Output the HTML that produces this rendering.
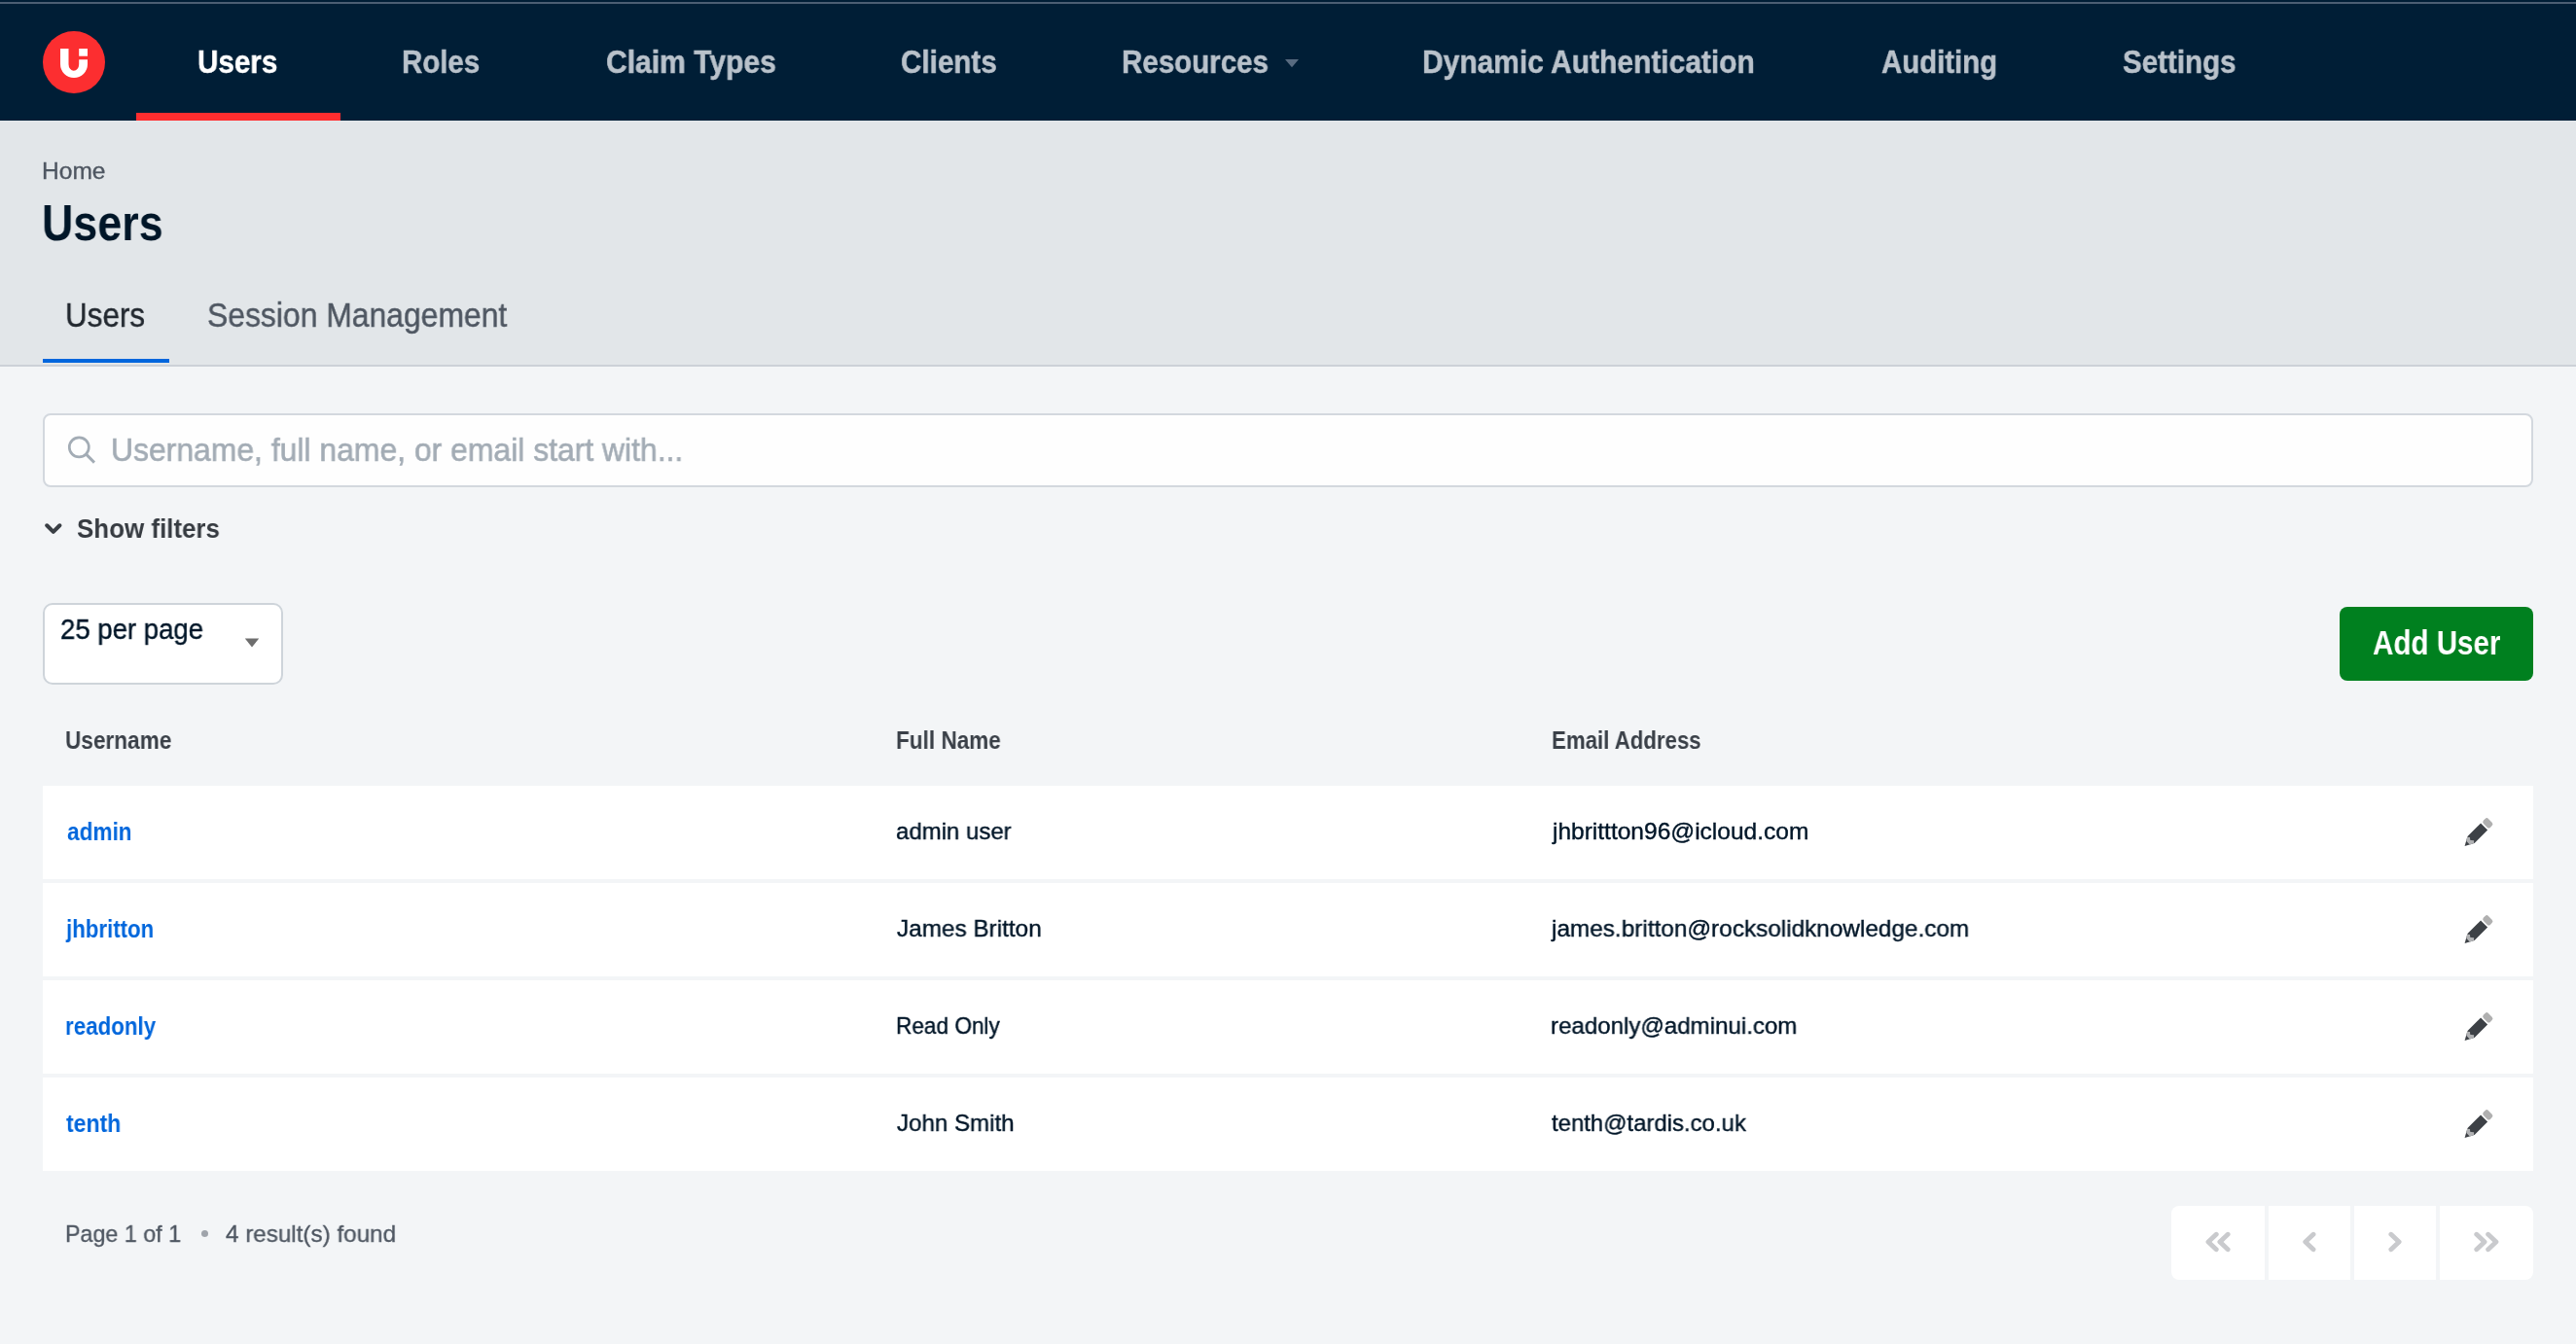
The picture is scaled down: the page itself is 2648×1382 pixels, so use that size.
<!DOCTYPE html>
<html><head><meta charset="utf-8">
<style>
html,body{margin:0;padding:0;}
body{width:2648px;height:1382px;overflow:hidden;position:relative;background:#f3f5f7;font-family:"Liberation Sans",sans-serif;}
.abs{position:absolute;}
.t{position:absolute;white-space:nowrap;transform-origin:0 0;will-change:transform;}
</style></head><body>
<div class="abs" style="left:0;top:0;width:2648px;height:124px;background:#001e36"></div>
<div class="abs" style="left:0;top:2px;width:2648px;height:2px;background:#4b5e73"></div>
<svg class="abs" style="left:44px;top:32px" width="64" height="64" viewBox="0 0 64 64">
<circle cx="32" cy="32" r="32" fill="#fc2e30"/>
<path d="M18,18 H26.5 V34 A5.35,6.7 0 0 0 37.2,34 V29.2 H46 V34 A14,14 0 0 1 18,34 Z" fill="#fff"/>
<rect x="37.2" y="18" width="8.8" height="7.7" fill="#fff"/>
</svg>
<div class="abs" style="left:140px;top:116px;width:210px;height:8px;background:#ff2d2f"></div>
<svg class="abs" style="left:1321px;top:61px" width="14" height="9" viewBox="0 0 14 9"><polygon points="0,0 14,0 7,8.2" fill="#586b80"/></svg>
<div class="abs" style="left:0;top:124px;width:2648px;height:251px;background:#e2e6e9"></div>
<div class="abs" style="left:0;top:375px;width:2648px;height:2px;background:#ccd1d8"></div>
<div class="abs" style="left:44px;top:369px;width:130px;height:4px;background:#0066dd"></div>
<div class="abs" style="left:44px;top:425px;width:2556px;height:72px;border:2px solid #d3d8de;border-radius:8px;background:#fefefe"></div>
<svg class="abs" style="left:66px;top:445px" width="36" height="36" viewBox="0 0 36 36"><circle cx="15.3" cy="14.9" r="10" fill="none" stroke="#a3acb5" stroke-width="2.7"/><line x1="22.3" y1="21.9" x2="31" y2="30.6" stroke="#a3acb5" stroke-width="2.9" stroke-linecap="butt"/></svg>
<svg class="abs" style="left:44px;top:536px" width="22" height="16" viewBox="0 0 22 16"><polyline points="4.2,4.3 10.8,10.9 17.4,4.3" fill="none" stroke="#3a3f45" stroke-width="4.1" stroke-linecap="round" stroke-linejoin="round"/></svg>
<div class="abs" style="left:44px;top:620px;width:243px;height:80px;border:2px solid #ced4da;border-radius:10px;background:#fff"></div>
<svg class="abs" style="left:251px;top:656px" width="16" height="10" viewBox="0 0 16 10"><polygon points="0.8,0.5 15.2,0.5 8,9.5" fill="#6e6e6e"/></svg>
<div class="abs" style="left:2405px;top:624px;width:199px;height:76px;border-radius:8px;background:#00801f"></div>
<div class="abs" style="left:44px;top:808px;width:2560px;height:96px;background:#fff"></div>
<div class="abs" style="left:44px;top:908px;width:2560px;height:96px;background:#fff"></div>
<div class="abs" style="left:44px;top:1008px;width:2560px;height:96px;background:#fff"></div>
<div class="abs" style="left:44px;top:1108px;width:2560px;height:96px;background:#fff"></div>
<svg class="abs" style="left:0;top:0" width="2648" height="1382" viewBox="0 0 2648 1382"><g transform="translate(0,0)"><g transform="translate(2534.0,869.6) rotate(-45)">
<polygon points="-0.6,0 8.6,-5 27.7,-5 27.7,5 8.6,5" fill="#3d4146"/>
<rect x="29.4" y="-5" width="7.1" height="10" rx="2.4" fill="#b0b0b0"/>
</g>
<polygon points="2535.4,865 2536.0,860.8 2539.0,861.0 2539.2,863.8 2543.1,864.3 2543.1,866.8 2540,868.2 2538.5,868.3" fill="#b1b2b4"/>
</g>
<g transform="translate(0,100)"><g transform="translate(2534.0,869.6) rotate(-45)">
<polygon points="-0.6,0 8.6,-5 27.7,-5 27.7,5 8.6,5" fill="#3d4146"/>
<rect x="29.4" y="-5" width="7.1" height="10" rx="2.4" fill="#b0b0b0"/>
</g>
<polygon points="2535.4,865 2536.0,860.8 2539.0,861.0 2539.2,863.8 2543.1,864.3 2543.1,866.8 2540,868.2 2538.5,868.3" fill="#b1b2b4"/>
</g>
<g transform="translate(0,200)"><g transform="translate(2534.0,869.6) rotate(-45)">
<polygon points="-0.6,0 8.6,-5 27.7,-5 27.7,5 8.6,5" fill="#3d4146"/>
<rect x="29.4" y="-5" width="7.1" height="10" rx="2.4" fill="#b0b0b0"/>
</g>
<polygon points="2535.4,865 2536.0,860.8 2539.0,861.0 2539.2,863.8 2543.1,864.3 2543.1,866.8 2540,868.2 2538.5,868.3" fill="#b1b2b4"/>
</g>
<g transform="translate(0,300)"><g transform="translate(2534.0,869.6) rotate(-45)">
<polygon points="-0.6,0 8.6,-5 27.7,-5 27.7,5 8.6,5" fill="#3d4146"/>
<rect x="29.4" y="-5" width="7.1" height="10" rx="2.4" fill="#b0b0b0"/>
</g>
<polygon points="2535.4,865 2536.0,860.8 2539.0,861.0 2539.2,863.8 2543.1,864.3 2543.1,866.8 2540,868.2 2538.5,868.3" fill="#b1b2b4"/>
</g></svg>
<div class="abs" style="left:206.9px;top:1265.2px;width:7.3px;height:7.3px;border-radius:50%;background:#9fa4ab"></div>
<div class="abs" style="left:2232px;top:1240px;width:96px;height:76px;background:#fff;border-radius:8px 0 0 8px"></div>
<div class="abs" style="left:2332px;top:1240px;width:84px;height:76px;background:#fff"></div>
<div class="abs" style="left:2420px;top:1240px;width:84px;height:76px;background:#fff"></div>
<div class="abs" style="left:2508px;top:1240px;width:96px;height:76px;background:#fff;border-radius:0 8px 8px 0"></div>
<svg class="abs" style="left:0;top:0" width="2648" height="1382" viewBox="0 0 2648 1382" fill="none" stroke="#c9cacd" stroke-width="4.9" stroke-linecap="round" stroke-linejoin="round">
<polyline points="2278.2,1269.3 2270,1277 2278.2,1284.7"/>
<polyline points="2290.1,1269.3 2281.9,1277 2290.1,1284.7"/>
<polyline points="2378,1269.3 2369.8,1277 2378,1284.7"/>
<polyline points="2457.9,1269.3 2466.1,1277 2457.9,1284.7"/>
<polyline points="2545.8,1269.3 2554,1277 2545.8,1284.7"/>
<polyline points="2557.7,1269.3 2565.9,1277 2557.7,1284.7"/>
</svg>
<div class="t" style="left:203.49px;top:47.16px;font-size:33.6px;line-height:33.6px;font-weight:700;color:#ffffff;transform:scaleX(0.8813);-webkit-text-stroke:0.5px #ffffff;">Users</div>
<div class="t" style="left:413.40px;top:47.16px;font-size:33.6px;line-height:33.6px;font-weight:700;color:#b9c2cb;transform:scaleX(0.8765);-webkit-text-stroke:0.5px #b9c2cb;">Roles</div>
<div class="t" style="left:622.56px;top:47.16px;font-size:33.6px;line-height:33.6px;font-weight:700;color:#b9c2cb;transform:scaleX(0.8949);-webkit-text-stroke:0.5px #b9c2cb;">Claim Types</div>
<div class="t" style="left:925.77px;top:47.16px;font-size:33.6px;line-height:33.6px;font-weight:700;color:#b9c2cb;transform:scaleX(0.8823);-webkit-text-stroke:0.5px #b9c2cb;">Clients</div>
<div class="t" style="left:1152.79px;top:47.16px;font-size:33.6px;line-height:33.6px;font-weight:700;color:#b9c2cb;transform:scaleX(0.8791);-webkit-text-stroke:0.5px #b9c2cb;">Resources</div>
<div class="t" style="left:1462.47px;top:47.16px;font-size:33.6px;line-height:33.6px;font-weight:700;color:#b9c2cb;transform:scaleX(0.8923);-webkit-text-stroke:0.5px #b9c2cb;">Dynamic Authentication</div>
<div class="t" style="left:1934.25px;top:47.16px;font-size:33.6px;line-height:33.6px;font-weight:700;color:#b9c2cb;transform:scaleX(0.8758);-webkit-text-stroke:0.5px #b9c2cb;">Auditing</div>
<div class="t" style="left:2182.45px;top:47.16px;font-size:33.6px;line-height:33.6px;font-weight:700;color:#b9c2cb;transform:scaleX(0.8802);-webkit-text-stroke:0.5px #b9c2cb;">Settings</div>
<div class="t" style="left:43.39px;top:164.06px;font-size:24.5px;line-height:24.5px;font-weight:400;color:#4f5762;transform:scaleX(1.0027);-webkit-text-stroke:0.35px #4f5762;">Home</div>
<div class="t" style="left:43.42px;top:203.18px;font-size:52px;line-height:52px;font-weight:700;color:#001628;transform:scaleX(0.8616);">Users</div>
<div class="t" style="left:67.22px;top:306.42px;font-size:35.3px;line-height:35.3px;font-weight:400;color:#22282f;transform:scaleX(0.8903);-webkit-text-stroke:0.45px #22282f;">Users</div>
<div class="t" style="left:213.10px;top:306.42px;font-size:35.3px;line-height:35.3px;font-weight:400;color:#4f5762;transform:scaleX(0.9028);-webkit-text-stroke:0.45px #4f5762;">Session Management</div>
<div class="t" style="left:113.70px;top:445.64px;font-size:33.5px;line-height:33.5px;font-weight:400;color:#a3acb5;transform:scaleX(0.9518);-webkit-text-stroke:0.6px #a3acb5;">Username, full name, or email start with...</div>
<div class="t" style="left:79.00px;top:529.92px;font-size:27.5px;line-height:27.5px;font-weight:700;color:#363b41;transform:scaleX(0.9430);">Show filters</div>
<div class="t" style="left:62.04px;top:632.79px;font-size:28.6px;line-height:28.6px;font-weight:400;color:#001628;transform:scaleX(0.9633);-webkit-text-stroke:0.4px #001628;">25 per page</div>
<div class="t" style="left:2439.00px;top:643.80px;font-size:34.5px;line-height:34.5px;font-weight:700;color:#ffffff;transform:scaleX(0.8566);">Add User</div>
<div class="t" style="left:67.49px;top:749.14px;font-size:25px;line-height:25px;font-weight:700;color:#3a4048;transform:scaleX(0.9050);">Username</div>
<div class="t" style="left:921.30px;top:749.14px;font-size:25px;line-height:25px;font-weight:700;color:#3a4048;transform:scaleX(0.9024);">Full Name</div>
<div class="t" style="left:1595.01px;top:749.14px;font-size:25px;line-height:25px;font-weight:700;color:#3a4048;transform:scaleX(0.8895);">Email Address</div>
<div class="t" style="left:68.80px;top:842.84px;font-size:25px;line-height:25px;font-weight:700;color:#0066dc;transform:scaleX(0.9039);">admin</div>
<div class="t" style="left:921.22px;top:843.26px;font-size:24.5px;line-height:24.5px;font-weight:400;color:#001628;transform:scaleX(0.9789);-webkit-text-stroke:0.4px #001628;">admin user</div>
<div class="t" style="left:1595.50px;top:843.26px;font-size:24.5px;line-height:24.5px;font-weight:400;color:#001628;transform:scaleX(1.0004);-webkit-text-stroke:0.4px #001628;">jhbrittton96@icloud.com</div>
<div class="t" style="left:68.09px;top:942.84px;font-size:25px;line-height:25px;font-weight:700;color:#0066dc;transform:scaleX(0.8903);">jhbritton</div>
<div class="t" style="left:922.20px;top:943.26px;font-size:24.5px;line-height:24.5px;font-weight:400;color:#001628;transform:scaleX(0.9923);-webkit-text-stroke:0.4px #001628;">James Britton</div>
<div class="t" style="left:1595.49px;top:943.26px;font-size:24.5px;line-height:24.5px;font-weight:400;color:#001628;transform:scaleX(0.9935);-webkit-text-stroke:0.4px #001628;">james.britton@rocksolidknowledge.com</div>
<div class="t" style="left:67.01px;top:1042.84px;font-size:25px;line-height:25px;font-weight:700;color:#0066dc;transform:scaleX(0.8945);">readonly</div>
<div class="t" style="left:920.66px;top:1043.26px;font-size:24.5px;line-height:24.5px;font-weight:400;color:#001628;transform:scaleX(0.9222);-webkit-text-stroke:0.4px #001628;">Read Only</div>
<div class="t" style="left:1594.32px;top:1043.26px;font-size:24.5px;line-height:24.5px;font-weight:400;color:#001628;transform:scaleX(0.9830);-webkit-text-stroke:0.4px #001628;">readonly@adminui.com</div>
<div class="t" style="left:67.90px;top:1142.84px;font-size:25px;line-height:25px;font-weight:700;color:#0066dc;transform:scaleX(0.9227);">tenth</div>
<div class="t" style="left:921.70px;top:1143.26px;font-size:24.5px;line-height:24.5px;font-weight:400;color:#001628;transform:scaleX(0.9833);-webkit-text-stroke:0.4px #001628;">John Smith</div>
<div class="t" style="left:1595.30px;top:1143.26px;font-size:24.5px;line-height:24.5px;font-weight:400;color:#001628;transform:scaleX(0.9762);-webkit-text-stroke:0.4px #001628;">tenth@tardis.co.uk</div>
<div class="t" style="left:67.20px;top:1257.16px;font-size:24.5px;line-height:24.5px;font-weight:400;color:#4f5762;transform:scaleX(0.9503);-webkit-text-stroke:0.35px #4f5762;">Page 1 of 1</div>
<div class="t" style="left:232.20px;top:1257.16px;font-size:24.5px;line-height:24.5px;font-weight:400;color:#4f5762;transform:scaleX(0.9887);-webkit-text-stroke:0.35px #4f5762;">4 result(s) found</div>
</body></html>
